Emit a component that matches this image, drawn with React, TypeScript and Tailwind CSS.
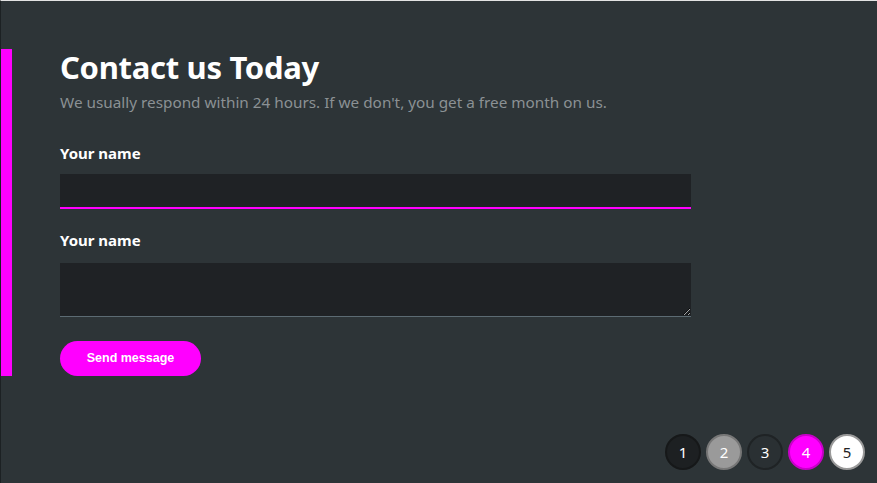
import { useState } from 'react'

const pages = [
  { n: 1, cls: 'bg-[#1d2022] border-[#161819] text-white' },
  { n: 2, cls: 'bg-[#9a9a9a] border-[#777777] text-white' },
  { n: 3, cls: 'bg-[#2a3033] border-[#1f2325] text-white' },
  { n: 4, cls: 'bg-[#ff00ff] border-[#c800c8] text-white' },
  { n: 5, cls: 'bg-white border-[#9a9a9a] text-[#222]' },
]

export default function App() {
  const [name, setName] = useState('')
  const [msg, setMsg] = useState('')

  return (
    <div
      className="w-[877px] h-[483px] bg-[#2d3437] border-t border-t-[#e3e3e3] border-l border-l-[#1c2123] flex flex-col overflow-hidden"
      style={{ fontFamily: '"Noto Sans", Lato, sans-serif' }}
    >
      <div className="flex mt-[48px]">
        {/* accent bar */}
        <div className="w-[11px] h-[327px] bg-[#ff00ff] shrink-0" />

        {/* form */}
        <div className="ml-[48px] w-[631px] flex flex-col">
          <h1 className="text-[31px] leading-[36px] font-bold text-white tracking-[-0.3px]">Contact us Today</h1>
          <p className="text-[15.3px] leading-5 text-[#8b9194] mt-[7px]">
            We usually respond within 24 hours. If we don't, you get a free month on us.
          </p>

          <label className="text-[15px] font-bold text-white mt-[31px] leading-5">Your name</label>
          <input
            autoFocus
            value={name}
            onChange={e => setName(e.target.value)}
            className="mt-[11px] h-[35px] bg-[#1f2225] border-b-2 border-[#ff00ff] text-white caret-[#cfcfcf] px-2 outline-none"
          />

          <label className="text-[15px] font-bold text-white mt-[21px] leading-5">Your name</label>
          <textarea
            value={msg}
            onChange={e => setMsg(e.target.value)}
            className="mt-[13px] h-[54px] bg-[#1f2225] border-b border-[#5c6b73] text-white px-2 outline-none resize-y"
          />

          <button
            className="mt-[24px] w-[141px] h-[35px] rounded-full bg-[#ff00ff] text-white text-[12.5px] font-bold"
            style={{ fontFamily: '"Liberation Sans", Arial, sans-serif' }}
          >
            Send message
          </button>
        </div>
      </div>

      {/* pagination */}
      <div className="mt-auto mb-[13px] mr-[12px] flex justify-end gap-[5px]">
        {pages.map(p => (
          <div
            key={p.n}
            className={`w-[36px] h-[36px] rounded-full border-2 flex items-center justify-center text-[15px] ${p.cls}`}
          >
            {p.n}
          </div>
        ))}
      </div>
    </div>
  )
}
